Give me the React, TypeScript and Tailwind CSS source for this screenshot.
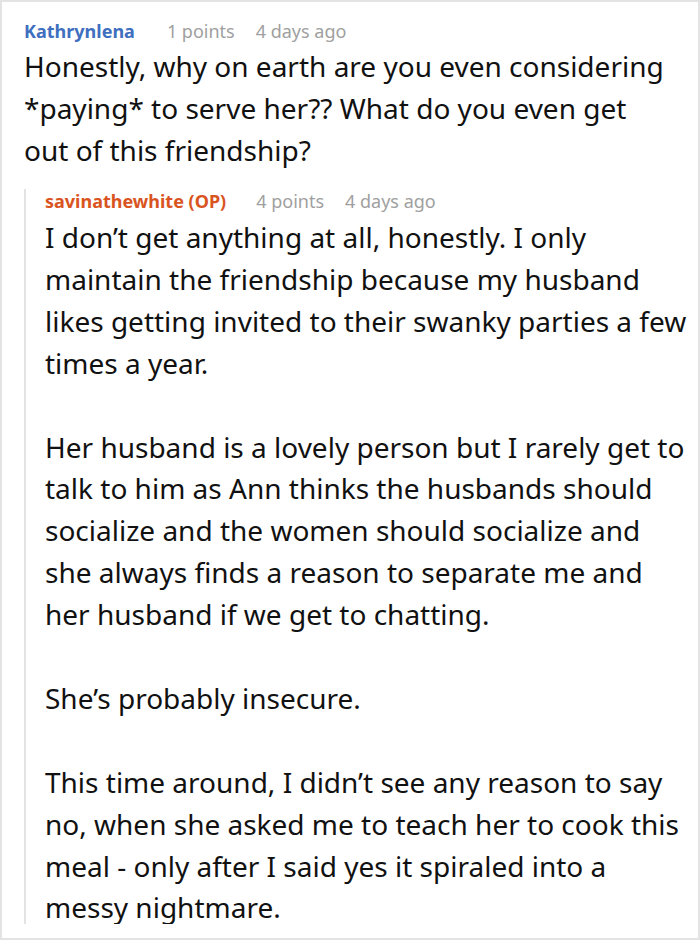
export default function App() {
  const reply = [
    "I don’t get anything at all, honestly. I only maintain the friendship because my husband likes getting invited to their swanky parties a few times a year.",
    "Her husband is a lovely person but I rarely get to talk to him as Ann thinks the husbands should socialize and the women should socialize and she always finds a reason to separate me and her husband if we get to chatting.",
    "She’s probably insecure.",
    "This time around, I didn’t see any reason to say no, when she asked me to teach her to cook this meal - only after I said yes it spiraled into a messy nightmare.",
  ];

  return (
    <div className="w-[700px] h-[940px] bg-white border-2 border-[#e3e3e3] overflow-hidden font-['Noto_Sans',sans-serif]">
      <div className="h-[922px] overflow-hidden pl-[22px] pr-[10px] pt-[17px]">
        {/* Comment */}
        <div className="flex items-baseline text-[18px] leading-[24px]">
          <span className="font-bold text-[#3f6fbf]">Kathrynlena</span>
          <span className="ml-[32px] text-[#a0a0a0]">1 points</span>
          <span className="ml-[21px] text-[#a0a0a0]">4 days ago</span>
        </div>
        <p className="w-[645px] text-[28px] leading-[42px] text-[#111] mt-[2px]">
          Honestly, why on earth are you even considering *paying* to serve her?? What do you even get out of this friendship?
        </p>

        {/* Reply */}
        <div className="mt-[18px] border-l-2 border-[#e3e3e3] pl-[19px]">
          <div className="flex items-baseline text-[18px] leading-[24px]">
            <span className="font-bold text-[#d9541e]">savinathewhite (OP)</span>
            <span className="ml-[30px] text-[#a0a0a0]">4 points</span>
            <span className="ml-[21px] text-[#a0a0a0]">4 days ago</span>
          </div>
          <div className="mt-[4px] text-[28px] leading-[41.9px] text-[#111] flex flex-col gap-[41.9px]">
            {reply.map((p, i) => (
              <p key={i}>{p}</p>
            ))}
          </div>
        </div>
      </div>
    </div>
  );
}
